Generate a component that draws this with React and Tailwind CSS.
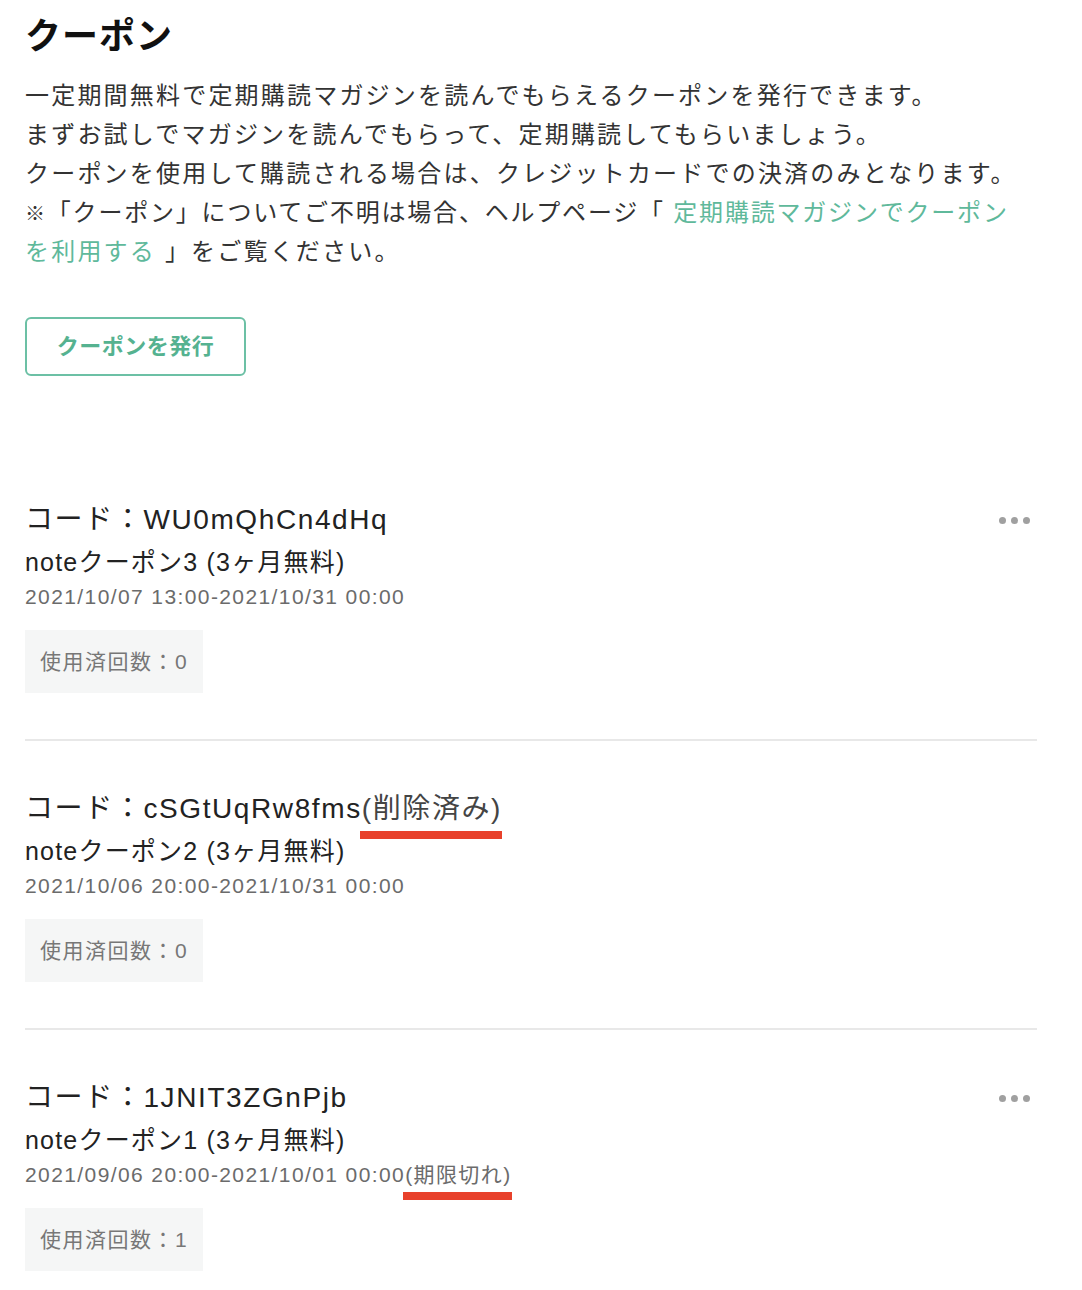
import React from "react";

const coupons = [
  {
    code: "WU0mQhCn4dHq",
    name: "noteクーポン3 (3ヶ月無料)",
    period: "2021/10/07 13:00-2021/10/31 00:00",
    used: 0,
    menu: true,
  },
  {
    code: "cSGtUqRw8fms",
    deleted: true,
    name: "noteクーポン2 (3ヶ月無料)",
    period: "2021/10/06 20:00-2021/10/31 00:00",
    used: 0,
    menu: false,
  },
  {
    code: "1JNIT3ZGnPjb",
    name: "noteクーポン1 (3ヶ月無料)",
    period: "2021/09/06 20:00-2021/10/01 00:00",
    expired: true,
    used: 1,
    menu: true,
  },
];

// red marker under a word (annotation drawn over the screenshot)
function Marked({ children, className, barClass }) {
  return (
    <span className={`relative ${className || ""}`}>
      {children}
      <span className={`absolute left-[-2px] right-0 h-[8px] bg-[#e8412b] ${barClass}`} />
    </span>
  );
}

function MoreDots() {
  return (
    <button type="button" className="flex items-center gap-[5px] pr-[7px]">
      <span className="w-[7px] h-[7px] rounded-full bg-[#a0a0a0]" />
      <span className="w-[7px] h-[7px] rounded-full bg-[#a0a0a0]" />
      <span className="w-[7px] h-[7px] rounded-full bg-[#a0a0a0]" />
    </button>
  );
}

function CouponItem({ c, last }) {
  return (
    <div className={last ? "pt-[48px]" : "pt-[48px] pb-[46px] border-b-2 border-[#e8e8e8]"}>
      <div className="flex items-center justify-between">
        <p className="text-[28px] leading-[40px] tracking-[1.6px] text-[#222]">
          コード：{c.code}
          {c.deleted && (
            <Marked className="text-[#444]" barClass="bottom-[-15px]">
              (削除済み)
            </Marked>
          )}
        </p>
        {c.menu && <MoreDots />}
      </div>
      <p className="mt-[4px] text-[25px] leading-[36px] tracking-[1.2px] text-[#222]">{c.name}</p>
      <p className="mt-[2px] text-[21px] leading-[30px] tracking-[1.4px] text-[#6b6b6b]">
        {c.period}
        {c.expired && <Marked barClass="bottom-[-14px]">(期限切れ)</Marked>}
      </p>
      <div className="mt-[18px] inline-flex items-center h-[63px] px-[15px] bg-[#f5f6f6] text-[21px] tracking-[1.5px] text-[#777]">
        使用済回数：{c.used}
      </div>
    </div>
  );
}

export default function App() {
  return (
    <div
      className="min-h-[1290px] bg-white px-[25px] pt-[13px]"
      style={{ fontFamily: '"Liberation Sans", "Noto Sans CJK JP", sans-serif' }}
    >
      <div className="w-[1012px]">
        <h1 className="text-[36px] leading-[48px] font-bold tracking-[1px] text-[#111]">クーポン</h1>
        <p className="mt-[15px] whitespace-nowrap text-[24px] leading-[39px] tracking-[2.2px] text-[#333]">
          一定期間無料で定期購読マガジンを読んでもらえるクーポンを発行できます。
          <br />
          まずお試しでマガジンを読んでもらって、定期購読してもらいましょう。
          <br />
          クーポンを使用して購読される場合は、クレジットカードでの決済のみとなります。
          <br />
          <span className="tracking-[1.8px]">
            <span className="text-[20px] leading-[0px]">※</span>「クーポン」についてご不明は場合、ヘルプページ「{" "}
            <a href="#" className="text-[#5fb99b]">
              定期購読マガジンでクーポン
            </a>
          </span>
          <br />
          <a href="#" className="text-[#5fb99b]">
            を利用する
          </a>{" "}
          」をご覧ください。
        </p>
        <button
          type="button"
          className="mt-[46px] w-[221px] h-[59px] flex items-center justify-center rounded-[6px] border-2 border-[#6cc0a5] text-[22px] font-bold tracking-[0.5px] text-[#55b290]"
        >
          クーポンを発行
        </button>

        <div className="mt-[76px]">
          {coupons.map((c, i) => (
            <CouponItem key={c.code} c={c} last={i === coupons.length - 1} />
          ))}
        </div>
      </div>
    </div>
  );
}
